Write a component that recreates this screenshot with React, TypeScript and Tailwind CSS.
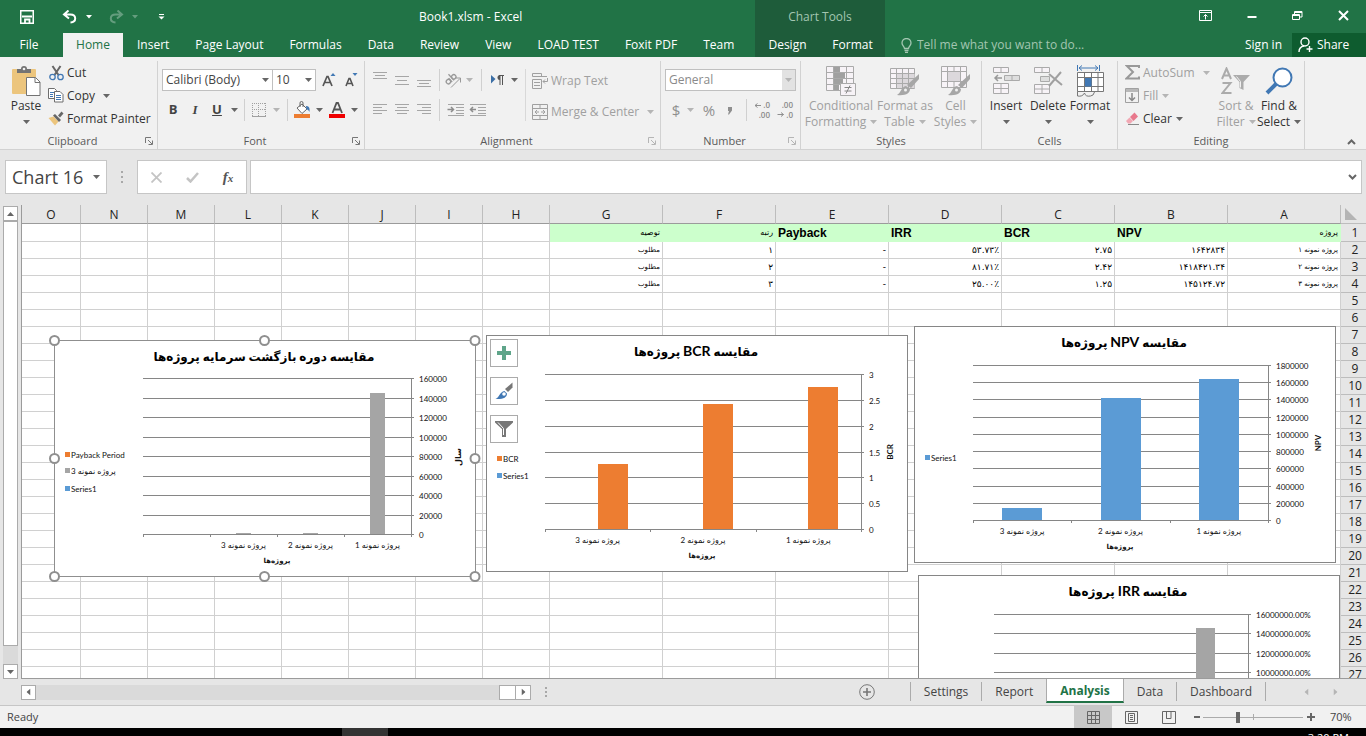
import React from 'react';
import clsx from 'clsx';

/* ---------- shared bits ---------- */

const Caret: React.FC<{ muted?: boolean; className?: string }> = ({ muted, className }) => (
  <svg width="7" height="4" viewBox="0 0 7 4" className={clsx('shrink-0', className)}>
    <path d="M0 0h7L3.5 4z" fill={muted ? '#b5b5b5' : '#666'} />
  </svg>
);

const Launcher: React.FC<{ muted?: boolean }> = ({ muted }) => (
  <svg width="8" height="8" viewBox="0 0 8 8" fill="none" stroke={muted ? '#b5b5b5' : '#777'}>
    <path d="M0.5 6V0.5H6M3 3l4 4M7.5 3.5v4h-4" />
  </svg>
);

const Divider = () => <div className="h-[22px] w-px shrink-0 bg-[#d0d0d0]" />;

const Group: React.FC<{
  label: string;
  className: string;
  launcher?: boolean;
  muted?: boolean;
  children: React.ReactNode;
}> = ({ label, className, launcher, muted, children }) => (
  <section aria-label={label} className={clsx('flex shrink-0 flex-col border-r border-[#d2d2d2]', className)}>
    <div className="flex h-[72px]">{children}</div>
    <div className="flex h-4 items-center text-[11px] text-[#5a5a5a]">
      <span className="flex-1 text-center">{label}</span>
      {launcher && (
        <button aria-label={`${label} settings`} className="w-3">
          <Launcher muted={muted} />
        </button>
      )}
    </div>
  </section>
);

const BigButton: React.FC<{
  icon: React.ReactNode;
  lines: string[];
  className: string;
  muted?: boolean;
}> = ({ icon, lines, className, muted }) => (
  <button
    className={clsx(
      'flex shrink-0 flex-col items-center pt-[3px] text-[12px] leading-4 whitespace-nowrap',
      muted ? 'text-[#a0a0a0]' : 'text-[#333]',
      className,
    )}
  >
    <span className="flex h-[34px] items-center justify-center">{icon}</span>
    <span>{lines[0]}</span>
    <span className="flex h-4 items-center gap-1">
      {lines[1]}
      <Caret muted={muted} />
    </span>
  </button>
);

const SmallButton: React.FC<{
  icon: React.ReactNode;
  text: string;
  muted?: boolean;
  caret?: boolean;
  wide?: boolean;
}> = ({ icon, text, muted, caret, wide }) => (
  <button
    className={clsx(
      'flex h-[23px] items-center text-[12px] whitespace-nowrap',
      muted ? 'text-[#a0a0a0]' : 'text-[#333]',
    )}
  >
    <span className="mr-[3px] flex w-4 justify-center">{icon}</span>
    {text}
    {caret && <Caret muted={muted} className={wide ? 'ml-2' : 'ml-1'} />}
  </button>
);

const IconButton: React.FC<{ label: string; className?: string; children: React.ReactNode }> = ({
  label,
  className = 'w-[22px]',
  children,
}) => (
  <button aria-label={label} className={clsx('flex h-[22px] shrink-0 items-center justify-center', className)}>
    {children}
  </button>
);

const Combo: React.FC<{ label: string; value: string; className: string; muted?: boolean }> = ({
  label,
  value,
  className,
  muted,
}) => (
  <div
    className={clsx(
      'flex h-[22px] shrink-0 items-center border border-[#c0c0c0] bg-white text-[12px]',
      muted ? 'text-[#8a8a8a]' : 'text-[#444]',
      className,
    )}
  >
    <select aria-label={label} className="h-full min-w-0 flex-1 appearance-none pl-[3px] outline-none">
      <option>{value}</option>
    </select>
    <span className={clsx('flex h-full w-[13px] items-center justify-center', muted && 'bg-[#e2e2e2]')}>
      <Caret muted={muted} />
    </span>
  </div>
);

/* ---------- icons ---------- */

const Lines: React.FC<{ rows: [number, number][]; top?: number; gap?: number }> = ({ rows, top = 3, gap = 4 }) => (
  <svg width="16" height="18" viewBox="0 0 16 18" stroke="#a6a6a6">
    {rows.map(([x, w], i) => (
      <path key={i} d={`M${x} ${top + i * gap + 0.5}h${w}`} />
    ))}
  </svg>
);

const PasteIcon = () => (
  <svg width="30" height="32" viewBox="0 0 30 32">
    <rect x="1" y="4" width="24" height="25" rx="1" fill="#ecc57d" />
    <path d="M6 8V4h4a3 3 0 0 1 6 0h4v4z" fill="#737373" />
    <circle cx="13" cy="4" r="1.3" fill="#f1f1f1" />
    <path d="M15.500 12.500h9l4.500 4.500v13.500h-13.500z" fill="#fff" stroke="#737373" />
    <path d="M24 12.500v5h5" fill="none" stroke="#737373" />
  </svg>
);

const CutIcon = () => (
  <svg width="15" height="16" viewBox="0 0 15 16" fill="none">
    <path d="M3.500 1l6 9M11.500 1l-6 9" stroke="#666" strokeWidth="2" />
    <circle cx="3.500" cy="12" r="2.700" stroke="#4178b4" strokeWidth="1.300" />
    <circle cx="11.500" cy="12" r="2.700" stroke="#4178b4" strokeWidth="1.300" />
  </svg>
);

const CopyIcon = () => (
  <svg width="16" height="15" viewBox="0 0 16 15" fill="#fff" stroke="#6e6e6e">
    <path d="M0.500 0.500h6l2 2v8h-8z" />
    <path d="M2 4.500h4M2 6.500h3M2 8.500h3" stroke="#4178b4" />
    <path d="M6.500 3.500h5.500l3 3v7.500h-8.500z" />
    <path d="M8 7.500h5M8 9.500h5M8 11.500h5" stroke="#4178b4" />
  </svg>
);

const PainterIcon = () => (
  <svg width="16" height="15" viewBox="0 0 16 15">
    <path d="M0.500 7l5-1.500 5 5L7 14.500z" fill="#ecc57d" />
    <path d="M5 4.500l2-1.500 6 6-2 2z" fill="#666" />
    <path d="M10 4.500L13.500 0.500l2 2-3.500 4z" fill="#666" />
  </svg>
);

const BordersIcon = () => (
  <svg width="14" height="14" viewBox="0 0 14 14" stroke="#a0a0a0" fill="none" shapeRendering="crispEdges">
    <path d="M0 0.500h14M0 6.500h14M0.500 0v14M6.500 0v14M13.500 0v14" strokeDasharray="1 1" />
    <path d="M0 13.500h14" />
  </svg>
);

const FillColorIcon = () => (
  <svg width="18" height="18" viewBox="0 0 18 18">
    <rect x="1" y="13" width="16" height="4" fill="#ed7d31" />
    <path d="M4 7l5-4 5 5-5 4.500z" fill="#fff" stroke="#666" />
    <path d="M7 6V2a1.500 1.500 0 0 1 3 0v4" fill="none" stroke="#666" />
    <path d="M13 5c3 0 4 2 3.500 6-1-2-2-2.500-3-2.500z" fill="#4178b4" />
  </svg>
);

const FontColorIcon = () => (
  <svg width="16" height="18" viewBox="0 0 16 18">
    <rect y="13" width="16" height="4" fill="#f00000" />
    <path d="M3.500 12L7.500 2h1.500l4 10M5 8.500h6.500" fill="none" stroke="#555" strokeWidth="1.800" />
  </svg>
);

const OrientationIcon = () => (
  <svg width="18" height="18" viewBox="0 0 18 18" fill="none" stroke="#999">
    <g transform="rotate(-42 7 9)" strokeWidth="1.300">
      <circle cx="4" cy="8.500" r="2.200" />
      <path d="M6.500 6v5.300M9 3v8.300" />
      <circle cx="11.200" cy="8.500" r="2.200" />
    </g>
    <path d="M7 16.500l9-9M12 7h4.500v4.500" />
  </svg>
);

const DirectionIcon = () => (
  <svg width="14" height="12" viewBox="0 0 14 12">
    <path d="M1 1l4.500 4L1 9.500z" fill="#3b6ea5" />
    <path d="M9 1.500h5M10 1.500V11M12.500 1.500V11" stroke="#555" fill="none" />
    <path d="M10 1a2.500 2.500 0 0 0 0 5z" fill="#555" />
  </svg>
);

const IndentIcon: React.FC<{ flip?: boolean }> = ({ flip }) => (
  <svg width="17" height="14" viewBox="0 0 17 14" fill="none" stroke="#a6a6a6">
    <path d="M1 1.500h16M9 4.500h8M9 7.500h8M9 10.500h8M1 12.500h16" />
    <path
      d={flip ? 'M7 6.500H1.500M4 4L1.500 6.500 4 9' : 'M0.500 6.500h6M4 4l2.500 2.500L4 9'}
      stroke="#8c8c8c"
      strokeWidth="1.500"
    />
  </svg>
);

const WrapIcon = () => (
  <svg width="16" height="16" viewBox="0 0 16 16" fill="none" stroke="#a0a0a0">
    <path d="M0.500 0.500h9v3h-9zM0.500 6.500h9v9h-9zM2 9.500h6M2 12.500h6M9 3.500h6" />
    <path d="M15.500 5v3.500H11M13 6.500l-2 2 2 2" />
  </svg>
);

const MergeIcon = () => (
  <svg width="16" height="16" viewBox="0 0 16 16" fill="none" stroke="#a0a0a0">
    <path d="M0.500 0.500h15v15H0.500zM0.500 4.500h15M0.500 11.500h15M8 0.500v4M8 11.500v4" />
    <path d="M3 8h4M9 8h4M5 6L3 8l2 2M11 6l2 2-2 2" />
  </svg>
);

const DecimalIcon: React.FC<{ increase?: boolean }> = ({ increase }) => (
  <span className="relative flex h-5 w-4 flex-col items-end text-[8px] leading-[10px] font-semibold text-[#8a8a8a]">
    <span>{increase ? '.0' : '.00'}</span>
    <span>{increase ? '.00' : '.0'}</span>
    <svg width="8" height="20" viewBox="0 0 8 20" fill="none" stroke="#8f8f8f" className="absolute top-0 left-0">
      <path d={increase ? 'M7 5.500H1M3.500 3.500l-2.500 2 2.500 2' : 'M0.500 14.500h6M4 12.500l2.500 2-2.500 2'} />
    </svg>
  </span>
);

const ConditionalIcon = () => (
  <svg width="30" height="30" viewBox="0 0 30 30" fill="#f7f3f7" stroke="#aaa">
    <path d="M0.500 0.500h27v24h-27zM7.500 0.500v24M20.500 0.500v24M0.500 6.500h27M0.500 12.500h27M0.500 18.500h27" />
    <path d="M8 1h6v5H8zM8 7h11v5H8zM8 13h9v5H8zM8 19h5v5H8z" fill="#a0a0a0" stroke="none" />
    <path d="M14.500 17.500h15v12h-15z" />
    <path d="M18.500 21.500h7M18.500 25h7M24 19.500l-4 8" stroke="#888" />
  </svg>
);

const Brush: React.FC = () => (
  <g stroke="none" fill="#a6a6a6">
    <path d="M29 8v5l-8 9-4-3z" />
    <path d="M16 20l4 3c0 4-4 7-13 6 4-2 4-8 9-9z" />
    <circle cx="15.500" cy="24" r="1.500" fill="#f1f1f1" />
  </g>
);

const TableStyleIcon = () => (
  <svg width="30" height="30" viewBox="0 0 30 30" fill="#f7f3f7" stroke="#aaa">
    <path d="M0.500 2.500h24v20h-24z" />
    <path d="M6.500 8h18v14h-18z" fill="#dcd8dc" stroke="none" />
    <path d="M6.500 2.500v20M12.500 2.500v20M18.500 2.500v20M0.500 7.500h24M0.500 12.500h24M0.500 17.500h24" fill="none" />
    <Brush />
  </svg>
);

const CellStyleIcon = () => (
  <svg width="30" height="30" viewBox="0 0 30 30" fill="#f7f3f7" stroke="#aaa">
    <path d="M0.500 0.500h25v21h-25zM6.500 0.500v21M19.500 0.500v21M0.500 5.500h25M0.500 15.500h25M13 0.500v5M13 15.500v6" />
    <path d="M6.500 5.500h13v10h-13z" fill="#dcd8dc" />
    <Brush />
  </svg>
);

const InsertIcon = () => (
  <svg width="27" height="28" viewBox="0 0 27 28" fill="#f7f3f7" stroke="#aaa">
    <path d="M0.500 0.500h15v5h-15zM8 0.500v5M0.500 16.500h15v10h-15zM8 16.500v10M0.500 21.500h15" />
    <path d="M11.500 8.500h15v5h-15z" fill="#dedede" />
    <path d="M19 8.500v5" />
    <path d="M9 11H2M5 8l-3 3 3 3" fill="none" stroke="#999" strokeWidth="1.500" />
  </svg>
);

const DeleteIcon = () => (
  <svg width="29" height="28" viewBox="0 0 29 28" fill="#f7f3f7" stroke="#aaa">
    <path d="M0.500 0.500h15v5h-15zM8 0.500v5M0.500 17.500h15v9h-15zM8 17.500v9M0.500 22h15" />
    <path d="M6.500 9.500h9v5h-9z" fill="#dedede" />
    <path d="M15 7l13 11M27 5L15 19" stroke="#a0a0a0" strokeWidth="2" />
  </svg>
);

const FormatIcon = () => (
  <svg width="29" height="32" viewBox="0 0 29 32" fill="none" stroke="#777">
    <path d="M1.500 0v6M23.500 0v6M3 3h19M6 0.500L3 3l3 2.500M19 0.500L22 3l-3 2.500" stroke="#4178b4" />
    <path d="M1.500 7.500h26v19h-26zM8.500 7.500v19M15.500 7.500v19M22 7.500v19M1.500 12.500h26M1.500 21.500h26" fill="#fff" />
    <path d="M9 13h6.500v8.500H9z" fill="#4178b4" stroke="none" />
    <path d="M1.500 26.500v4.500q5 1 7-3 1 4 6 3 3 0 4-4" />
  </svg>
);

const SigmaIcon = () => (
  <svg width="15" height="15" viewBox="0 0 15 15" fill="none" stroke="#999" strokeWidth="2">
    <path d="M14 3V1H2l6 6-6.500 6.500H14v-2" />
  </svg>
);

const FillIcon = () => (
  <svg width="14" height="15" viewBox="0 0 14 15" fill="none" stroke="#a0a0a0">
    <path d="M0.500 0.500h13v14H0.500z" />
    <path d="M1 1h12v3H1z" fill="#b8b8b8" stroke="none" />
    <path d="M7 5v8M4 9.500L7 12.500l3-3" stroke="#888" strokeWidth="1.500" />
  </svg>
);

const EraserIcon = () => (
  <svg width="14" height="13" viewBox="0 0 14 13">
    <path d="M5 5L9.500 0.500l3.500 4L8.500 9z" fill="#e8788c" />
    <path d="M4.500 5.500L8 9l-2.500 2.500H3L1 9z" fill="#f2a7b3" />
    <path d="M3 12.500h11" stroke="#888" />
  </svg>
);

const SortIcon = () => (
  <svg width="30" height="28" viewBox="0 0 30 28" fill="none" stroke="#ababab" strokeWidth="2">
    <path d="M1 12L5.500 1.500 10 12M2.500 8.500h6M1.500 16h8L1.500 26h9" />
    <path d="M12 8h17l-6.500 7v8l-4-2v-6z" fill="#ababab" stroke="none" />
    <path d="M15.500 9.500l4 5v6" stroke="#f1f1f1" strokeWidth="1" />
  </svg>
);

const FindIcon = () => (
  <svg width="28" height="28" viewBox="0 0 28 28" fill="none" stroke="#4178b4">
    <circle cx="17.500" cy="10.500" r="9" fill="#fff" strokeWidth="2" />
    <path d="M11 17l-9 9" strokeWidth="4" />
  </svg>
);

/* ---------- header ---------- */

const TABS = ['Insert', 'Page Layout', 'Formulas', 'Data', 'Review', 'View', 'LOAD TEST', 'Foxit PDF', 'Team'];

const Header: React.FC = () => (
  <header className="flex h-[57px] shrink-0 bg-[#217346] text-[12px] text-white">
    <div className="flex w-[755px] shrink-0 flex-col">
      <div className="flex h-[33px] items-center">
        <div className="flex flex-1 items-center pl-5">
          <button aria-label="Save">
            <svg width="14" height="14" viewBox="0 0 14 14" fill="none" stroke="#fff" strokeWidth="1.500">
              <path d="M0.750 0.750h12.500v12.500H0.750z" />
              <path d="M2 6.500h10M5 13V9.500h4.500V13" strokeWidth="1.800" />
            </svg>
          </button>
          <button aria-label="Undo" className="ml-7 flex items-center gap-2">
            <svg width="16" height="14" viewBox="0 0 16 14" fill="none" stroke="#fff" strokeWidth="2">
              <path d="M6.500 0.500L2 4.500l5 4M2.500 4.500h6c6 0 6.500 7.500 0 8" />
            </svg>
            <svg width="6" height="4" viewBox="0 0 6 4">
              <path d="M0 0h6L3 3.500z" fill="#fff" />
            </svg>
          </button>
          <button aria-label="Redo" className="ml-4 flex items-center gap-2 opacity-30">
            <svg width="16" height="14" viewBox="0 0 16 14" fill="none" stroke="#fff" strokeWidth="2">
              <path d="M9.500 0.500L14 4.500l-5 4M13.500 4.500h-6c-6 0-6.500 7.500 0 8" />
            </svg>
            <svg width="6" height="4" viewBox="0 0 6 4">
              <path d="M0 0h6L3 3.500z" fill="#fff" />
            </svg>
          </button>
          <button aria-label="Customize Quick Access Toolbar" className="ml-5">
            <svg width="7" height="6" viewBox="0 0 7 6">
              <path d="M1 0.500h5" stroke="#fff" />
              <path d="M0.500 2.500h6L3.500 5.500z" fill="#fff" />
            </svg>
          </button>
        </div>
        <h1 className="w-[337px] pl-px text-[12px]">Book1.xlsm - Excel</h1>
      </div>
      <nav className="flex h-6 items-center">
        <button className="w-[58px] shrink-0">File</button>
        <button className="mr-px ml-[5px] h-full w-[60px] shrink-0 bg-[#f1f1f1] text-[#217346]">Home</button>
        {TABS.map(tab => (
          <button key={tab} className="h-full px-[13px] whitespace-nowrap">
            {tab}
          </button>
        ))}
      </nav>
    </div>
    <div className="flex w-[130px] shrink-0 flex-col bg-[#1e5c3a]">
      <div className="flex h-[33px] items-center justify-center text-[#a3c6b1]">Chart Tools</div>
      <nav className="flex h-6">
        <button className="flex-1">Design</button>
        <button className="flex-1">Format</button>
      </nav>
    </div>
    <div className="flex min-w-0 flex-1 flex-col">
      <div className="flex h-[30px] items-center justify-end gap-[35px] pr-[17px]">
        <button aria-label="Ribbon Display Options">
          <svg width="13" height="11" viewBox="0 0 13 11" fill="none" stroke="#fff">
            <path d="M0.500 0.500h12v10H0.500zM0.500 2.500h12M6.500 9.500V4.500M4.500 6.500l2-2 2 2" />
          </svg>
        </button>
        <button aria-label="Minimize">
          <svg width="10" height="11" viewBox="0 0 10 11">
            <path d="M0.500 7h9" stroke="#fff" strokeWidth="2" />
          </svg>
        </button>
        <button aria-label="Restore">
          <svg width="11" height="11" viewBox="0 0 11 11" fill="none" stroke="#fff">
            <path d="M0.500 4.500h7v5h-7zM0.500 5.500h7M2.500 4V1.500h7.500v5.500H8M2.500 2.500H10" />
          </svg>
        </button>
        <button aria-label="Close">
          <svg width="11" height="11" viewBox="0 0 11 11" stroke="#fff" strokeWidth="2">
            <path d="M1 1l9 9M10 1l-9 9" />
          </svg>
        </button>
      </div>
      <div className="mt-[3px] flex h-6 items-center">
        <label htmlFor="tell-me" className="pl-4" aria-label="Tell me what you want to do">
          <svg width="11" height="15" viewBox="0 0 11 15" fill="none" stroke="#a3c6b1" strokeWidth="1.300">
            <path d="M3.500 10.500c0-2-2.500-3-2.500-5.500a4.500 4.500 0 0 1 9 0c0 2.500-2.500 3.500-2.500 5.500zM3.500 12.500h4M4 14.300h3" />
          </svg>
        </label>
        <input
          id="tell-me"
          placeholder="Tell me what you want to do..."
          className="ml-[5px] w-[190px] bg-transparent outline-none placeholder:text-[#a3c6b1]"
        />
        <span className="flex-1" />
        <button className="mr-[10px]">Sign in</button>
        <button className="flex h-full w-[74px] items-center gap-1 bg-[#0e5c2f] pl-[6px]">
          <svg width="15" height="16" viewBox="0 0 15 16" fill="none" stroke="#fff" strokeWidth="1.400">
            <circle cx="7" cy="5" r="4" />
            <path d="M1 15c0-4 2-5.500 5-6M11.500 9v6M8.500 12h6" />
          </svg>
          Share
        </button>
      </div>
    </div>
  </header>
);

/* ---------- ribbon ---------- */

const Ribbon: React.FC = () => (
  <div className="flex h-[93px] shrink-0 border-b border-[#d2d2d2] bg-[#f1f1f1] pt-1">
    <Group label="Clipboard" className="w-[158px]" launcher>
      <BigButton icon={<PasteIcon />} lines={['Paste']} className="w-12 pl-1" />
      <div className="flex flex-col">
        <SmallButton icon={<CutIcon />} text="Cut" />
        <SmallButton icon={<CopyIcon />} text="Copy" caret wide />
        <SmallButton icon={<PainterIcon />} text="Format Painter" />
      </div>
    </Group>

    <Group label="Font" className="w-[207px]" launcher>
      <div className="flex flex-col gap-2 pt-2 pl-1">
        <div className="flex items-center">
          <Combo label="Font" value="Calibri (Body)" className="w-[111px]" />
          <Combo label="Font size" value="10" className="w-[43px] border-l-0" />
          <span className="w-[2px]" />
          <IconButton label="Increase font size">
            <svg width="14" height="16" viewBox="0 0 14 16">
              <path d="M1 14L5 4.500h1L10 14M2.500 10.500h6" fill="none" stroke="#555" strokeWidth="1.700" />
              <path d="M8.500 4L11 1l2.500 3z" fill="#4178b4" />
            </svg>
          </IconButton>
          <IconButton label="Decrease font size">
            <svg width="14" height="16" viewBox="0 0 14 16">
              <path d="M2 14l3-7.500h1L9 14M3 11.500h5" fill="none" stroke="#555" strokeWidth="1.600" />
              <path d="M8.500 1h5L11 4z" fill="#4178b4" />
            </svg>
          </IconButton>
        </div>
        <div className="flex items-center text-[13px] text-[#444]">
          <IconButton label="Bold">
            <b>B</b>
          </IconButton>
          <IconButton label="Italic">
            <i className="font-[Liberation_Serif,serif] font-bold">I</i>
          </IconButton>
          <IconButton label="Underline">
            <b className="underline">U</b>
          </IconButton>
          <IconButton label="Underline options" className="w-3">
            <Caret />
          </IconButton>
          <span className="w-1" />
          <Divider />
          <IconButton label="Borders" className="w-7">
            <BordersIcon />
          </IconButton>
          <Caret muted />
          <span className="w-[7px]" />
          <Divider />
          <IconButton label="Fill color" className="w-7">
            <FillColorIcon />
          </IconButton>
          <Caret />
          <IconButton label="Font color" className="w-7">
            <FontColorIcon />
          </IconButton>
          <Caret />
        </div>
      </div>
    </Group>

    <Group label="Alignment" className="w-[296px]" launcher muted>
      <div className="flex flex-col gap-2 pt-2 pl-1">
        <div className="flex items-center">
          <IconButton label="Top align">
            <Lines rows={[[1, 14], [3, 10], [1, 14]]} top={1} gap={3} />
          </IconButton>
          <IconButton label="Middle align">
            <Lines rows={[[1, 14], [3, 10], [1, 14]]} top={5} />
          </IconButton>
          <IconButton label="Bottom align">
            <Lines rows={[[1, 14], [3, 10], [1, 14]]} top={9} gap={3} />
          </IconButton>
          <span className="w-1" />
          <Divider />
          <IconButton label="Orientation" className="w-[26px]">
            <OrientationIcon />
          </IconButton>
          <Caret muted />
          <span className="w-2" />
          <Divider />
          <IconButton label="Text direction" className="w-[29px]">
            <DirectionIcon />
          </IconButton>
          <Caret />
        </div>
        <div className="flex items-center">
          <IconButton label="Align left">
            <Lines rows={[[1, 14], [1, 9], [1, 14], [1, 9]]} gap={3} />
          </IconButton>
          <IconButton label="Center">
            <Lines rows={[[1, 14], [3, 10], [1, 14], [3, 10]]} gap={3} />
          </IconButton>
          <IconButton label="Align right">
            <Lines rows={[[1, 14], [6, 9], [1, 14], [6, 9]]} gap={3} />
          </IconButton>
          <span className="w-1" />
          <Divider />
          <span className="w-1" />
          <IconButton label="Increase indent">
            <IndentIcon />
          </IconButton>
          <IconButton label="Decrease indent">
            <IndentIcon flip />
          </IconButton>
        </div>
      </div>
      <div className="mt-2 ml-[7px] h-[52px] w-px bg-[#d8d8d8]" />
      <div className="flex flex-col gap-2 pt-2 pl-[6px]">
        <SmallButton icon={<WrapIcon />} text="Wrap Text" muted />
        <SmallButton icon={<MergeIcon />} text="Merge & Center" muted caret wide />
      </div>
    </Group>

    <Group label="Number" className="w-[140px]" launcher muted>
      <div className="flex flex-col gap-2 pt-2 pl-1">
        <Combo label="Number format" value="General" className="w-[131px]" muted />
        <div className="flex items-center text-[15px] text-[#8f8f8f]">
          <IconButton label="Currency">$</IconButton>
          <Caret muted />
          <IconButton label="Percent" className="w-[30px]">
            %
          </IconButton>
          <IconButton label="Comma style" className="w-3">
            <svg width="6" height="9" viewBox="0 0 6 9">
              <path d="M1 1h4v3.500L2 8.500H1L2 5H1z" fill="#8f8f8f" />
            </svg>
          </IconButton>
          <span className="w-[10px]" />
          <Divider />
          <IconButton label="Increase decimal" className="w-[30px]">
            <DecimalIcon increase />
          </IconButton>
          <IconButton label="Decrease decimal" className="w-4">
            <DecimalIcon />
          </IconButton>
        </div>
      </div>
    </Group>

    <Group label="Styles" className="w-[181px]">
      <BigButton icon={<ConditionalIcon />} lines={['Conditional', 'Formatting']} className="w-20" muted />
      <BigButton icon={<TableStyleIcon />} lines={['Format as', 'Table']} className="w-12" muted />
      <BigButton icon={<CellStyleIcon />} lines={['Cell', 'Styles']} className="w-[53px]" muted />
    </Group>

    <Group label="Cells" className="w-[136px]">
      <BigButton icon={<InsertIcon />} lines={['Insert']} className="ml-[3px] w-[42px]" />
      <BigButton icon={<DeleteIcon />} lines={['Delete']} className="w-[42px]" />
      <BigButton icon={<FormatIcon />} lines={['Format']} className="w-[42px]" />
    </Group>

    <Group label="Editing" className="w-[187px]">
      <div className="flex w-[96px] flex-col pl-[6px]">
        <SmallButton icon={<SigmaIcon />} text="AutoSum" muted caret wide />
        <SmallButton icon={<FillIcon />} text="Fill" muted caret />
        <SmallButton icon={<EraserIcon />} text="Clear" caret />
      </div>
      <BigButton icon={<SortIcon />} lines={['Sort &', 'Filter']} className="w-[44px]" muted />
      <BigButton icon={<FindIcon />} lines={['Find &', 'Select']} className="w-[42px]" />
    </Group>

    <div className="flex flex-1 items-end justify-end pr-[10px] pb-1">
      <button aria-label="Collapse ribbon">
        <svg width="9" height="7" viewBox="0 0 9 7" fill="none" stroke="#666" strokeWidth="2">
          <path d="M1 6l3.500-3.500L8 6" />
        </svg>
      </button>
    </div>
  </div>
);

const FormulaBar: React.FC = () => (
  <div className="flex h-[55px] shrink-0 items-start bg-[#e6e6e6] pt-[10px] pr-1 pl-[5px]">
    <div className="flex h-[34px] w-[102px] items-center border border-[#c6c6c6] bg-white pr-[6px]">
      <select aria-label="Name box" className="min-w-0 flex-1 appearance-none pl-1.5 text-[18px] text-[#444] outline-none">
        <option>Chart 16</option>
      </select>
      <Caret />
    </div>
    <div className="flex h-[34px] w-[30px] flex-col items-center justify-center gap-[3px]">
      <i className="size-[2px] bg-[#a8a8a8]" />
      <i className="size-[2px] bg-[#a8a8a8]" />
      <i className="size-[2px] bg-[#a8a8a8]" />
    </div>
    <div className="flex h-[34px] w-[110px] items-center border border-[#c6c6c6] bg-white">
      <button aria-label="Cancel" className="flex w-9 justify-center">
        <svg width="11" height="11" viewBox="0 0 11 11" stroke="#c4c4c4" strokeWidth="1.800">
          <path d="M0.500 0.500l10 10M10.500 0.500l-10 10" />
        </svg>
      </button>
      <button aria-label="Enter" className="flex w-9 justify-center">
        <svg width="13" height="11" viewBox="0 0 13 11" fill="none" stroke="#c4c4c4" strokeWidth="2.500">
          <path d="M1 6l3.500 3.500L12 1" />
        </svg>
      </button>
      <button aria-label="Insert function" className="w-9 font-[Liberation_Serif,serif] text-[15px] font-bold text-[#555] italic">
        f<span className="text-[11px]">x</span>
      </button>
    </div>
    <div className="ml-[3px] flex h-[34px] min-w-0 flex-1 items-center border border-[#c6c6c6] bg-white pr-1">
      <input aria-label="Formula" className="min-w-0 flex-1 px-2 text-[18px] outline-none" />
      <svg width="9" height="7" viewBox="0 0 9 7" fill="none" stroke="#666" strokeWidth="2">
        <path d="M1 1l3.500 3.500L8 1" />
      </svg>
    </div>
  </div>
);

/* ---------- charts ---------- */

interface Bar {
  slot: number;
  value: number;
}

interface ChartProps {
  title: React.ReactNode;
  left: number;
  axis: number;
  top: number;
  max: number;
  ticks: string[]; // from the axis maximum down to zero
  slots: number;
  bars: Bar[];
  barWidth: number;
  barShift?: number;
  color: string;
  names: { slot: number; text: string }[];
  xTitleX?: number;
  yTitle?: string;
  legend: { color: string; text: string; y: number; rtl?: boolean }[];
}

const BASE = 194;

const Chart: React.FC<ChartProps> = p => {
  const slotWidth = (p.axis - p.left) / p.slots;
  const step = (BASE - p.top) / (p.ticks.length - 1);
  const mid = (slot: number) => p.left + slotWidth * (slot + 0.5);

  return (
    <svg
      width="422"
      height="237"
      viewBox="0 0 422 237"
      className="overflow-visible font-[Lato,'DejaVu_Sans',sans-serif] text-[8px]"
      fill="#111"
    >
      <rect x="0.5" y="0.5" width="421" height="236" fill="#fff" stroke="#868686" />
      <text x="210" y="21" textAnchor="middle" direction="rtl" className="text-[12px] font-bold" fill="#000">
        {p.title}
      </text>
      {p.ticks.map((t, i) => {
        const y = Math.round(p.top + step * i) + 0.5;
        return (
          <g key={t}>
            <path d={`M${p.left} ${y}H${p.axis + 3}`} stroke="#868686" />
            <text x={p.axis + 8} y={y + 3}>
              {t}
            </text>
          </g>
        );
      })}
      <path d={`M${p.axis + 0.5} ${p.top}V${BASE + 3}`} stroke="#868686" />
      {Array.from({ length: p.slots }, (_, i) => (
        <path key={i} d={`M${Math.round(p.left + slotWidth * i) + 0.5} ${BASE}v3`} stroke="#868686" />
      ))}
      {p.bars.map(b => {
        const h = Math.max(1, Math.round(((BASE - p.top) * b.value) / p.max));
        const x = Math.round(mid(b.slot) - p.barWidth / 2 + (p.barShift ?? 0));
        return <rect key={b.slot} x={x} y={BASE - h} width={p.barWidth} height={h} fill={p.color} />;
      })}
      {p.names.map(n => (
        <text key={n.text} x={mid(n.slot)} y="208" textAnchor="middle" direction="rtl">
          {n.text}
        </text>
      ))}
      {p.xTitleX && (
        <text x={p.xTitleX} y="223" textAnchor="middle" direction="rtl" className="text-[7px] font-bold">
          پروژه‌ها
        </text>
      )}
      {p.yTitle && (
        <text transform="translate(407 117) rotate(-90)" textAnchor="middle" className="font-bold">
          {p.yTitle}
        </text>
      )}
      {p.legend.map(l => (
        <g key={l.text}>
          <rect x="11" y={l.y - 3} width="5" height="5" fill={l.color} />
          <text x="17" y={l.y + 3} direction={l.rtl ? 'rtl' : 'ltr'} textAnchor={l.rtl ? 'end' : 'start'}>
            {l.text}
          </text>
        </g>
      ))}
    </svg>
  );
};

const CompareTitle: React.FC<{ metric: string }> = ({ metric }) => (
  <>
    مقایسه <tspan className="text-[14px]">{metric}</tspan> پروژه‌ها
  </>
);

const PROJECTS = ['پروژه نمونه 1', 'پروژه نمونه 2', 'پروژه نمونه 3'];

const NAMES3 = [
  { slot: 2, text: PROJECTS[0] },
  { slot: 1, text: PROJECTS[1] },
  { slot: 0, text: PROJECTS[2] },
];

const NpvChart = () => (
  <Chart
    title={<CompareTitle metric="NPV" />}
    left={59}
    axis={354}
    top={39}
    max={1800000}
    ticks={['1800000', '1600000', '1400000', '1200000', '1000000', '800000', '600000', '400000', '200000', '0']}
    slots={3}
    bars={[
      { slot: 2, value: 1642834 },
      { slot: 1, value: 1418421 },
      { slot: 0, value: 145124 },
    ]}
    barWidth={40}
    color="#5b9bd5"
    names={NAMES3}
    xTitleX={206}
    yTitle="NPV"
    legend={[{ color: '#5b9bd5', text: 'Series1', y: 132 }]}
  />
);

const BcrChart = () => (
  <Chart
    title={<CompareTitle metric="BCR" />}
    left={59}
    axis={375}
    top={39}
    max={3}
    ticks={['3', '2.5', '2', '1.5', '1', '0.5', '0']}
    slots={3}
    bars={[
      { slot: 2, value: 2.75 },
      { slot: 1, value: 2.42 },
      { slot: 0, value: 1.25 },
    ]}
    barWidth={30}
    barShift={15}
    color="#ed7d31"
    names={NAMES3}
    xTitleX={216}
    yTitle="BCR"
    legend={[
      { color: '#ed7d31', text: 'BCR', y: 124 },
      { color: '#5b9bd5', text: 'Series1', y: 141 },
    ]}
  />
);

const PaybackChart = () => (
  <Chart
    title="مقایسه دوره بازگشت سرمایه پروژه‌ها"
    left={89}
    axis={357}
    top={38}
    max={160000}
    ticks={['160000', '140000', '120000', '100000', '80000', '60000', '40000', '20000', '0']}
    slots={4}
    bars={[
      { slot: 3, value: 145124 },
      { slot: 2, value: 1 },
      { slot: 1, value: 1 },
    ]}
    barWidth={15}
    color="#a5a5a5"
    names={[
      { slot: 3, text: PROJECTS[0] },
      { slot: 2, text: PROJECTS[1] },
      { slot: 1, text: PROJECTS[2] },
    ]}
    xTitleX={223}
    yTitle="سال"
    legend={[
      { color: '#ed7d31', text: 'Payback Period', y: 115 },
      { color: '#a5a5a5', text: 'پروژه نمونه 3', y: 131, rtl: true },
      { color: '#5b9bd5', text: 'Series1', y: 149 },
    ]}
  />
);

const IrrChart = () => (
  <Chart
    title={<CompareTitle metric="IRR" />}
    left={76}
    axis={330}
    top={39}
    max={16000000}
    ticks={[
      '16000000.00%',
      '14000000.00%',
      '12000000.00%',
      '10000000.00%',
      '8000000.00%',
      '6000000.00%',
      '4000000.00%',
      '2000000.00%',
      '0.00%',
    ]}
    slots={3}
    bars={[{ slot: 2, value: 14512472 }]}
    barWidth={19}
    color="#a5a5a5"
    names={NAMES3}
    legend={[]}
  />
);

const SelectionHandles = () => (
  <svg width="422" height="237" viewBox="0 0 422 237" className="absolute inset-0 overflow-visible" fill="#fff">
    <rect x="0.5" y="0.5" width="421" height="236" fill="none" stroke="#8f8f8f" />
    {[0.5, 210.5, 421].map(x =>
      [0.5, 118.5, 236.5]
        .filter(y => !(x === 210.5 && y === 118.5))
        .map(y => <circle key={`${x}-${y}`} cx={x} cy={y} r="4.500" stroke="#8f8f8f" strokeWidth="2" />),
    )}
  </svg>
);

const ChartTools = () => (
  <div className="absolute top-1 left-1 flex flex-col gap-[10px]">
    <button aria-label="Chart elements" className="flex size-7 items-center justify-center border border-[#ababab] bg-white">
      <svg width="14" height="14" viewBox="0 0 14 14" fill="#5fa58a">
        <path d="M5 0h4v5h5v4H9v5H5V9H0V5h5z" />
      </svg>
    </button>
    <button aria-label="Chart styles" className="flex size-7 items-center justify-center border border-[#ababab] bg-white">
      <svg width="18" height="18" viewBox="0 0 18 18">
        <path d="M17.500 0.500v5L13 10l-3-3z" fill="#777" />
        <path d="M9.500 9l2.500 2.500c0 4-4 6-11.500 5.500 4-1.500 4-7 9-8z" fill="#4178b4" />
        <circle cx="9" cy="12" r="1.800" fill="#fff" />
      </svg>
    </button>
    <button aria-label="Chart filters" className="flex size-7 items-center justify-center border border-[#ababab] bg-white">
      <svg width="18" height="16" viewBox="0 0 18 16">
        <path d="M0 0h18v1.500L11 8v8H7V8L0 1.500z" fill="#777" />
        <path d="M3 1.500L8.500 7.500V14" fill="none" stroke="#fff" />
      </svg>
    </button>
  </div>
);

/* ---------- sheet ---------- */

const NARROW = ['N', 'M', 'L', 'K', 'J', 'I', 'H'];
const WIDE = ['G', 'F', 'E', 'D', 'C', 'B', 'A'];
const COLUMNS = ['O', ...NARROW, ...WIDE];

const HEADINGS: Record<string, string> = {
  G: 'توصیه',
  F: 'رتبه',
  E: 'Payback',
  D: 'IRR',
  C: 'BCR',
  B: 'NPV',
  A: 'پروژه',
};

const DATA: Record<string, string>[] = [
  { G: 'مطلوب', F: '۱', E: '-', D: '۵۳.۷۳٪', C: '۲.۷۵', B: '۱۶۴۲۸۳۴', A: 'پروژه نمونه ۱' },
  { G: 'مطلوب', F: '۲', E: '-', D: '۸۱.۷۱٪', C: '۲.۴۲', B: '۱۴۱۸۴۲۱.۳۴', A: 'پروژه نمونه ۲' },
  { G: 'مطلوب', F: '۳', E: '-', D: '۲۵.۰۰٪', C: '۱.۲۵', B: '۱۴۵۱۲۴.۷۲', A: 'پروژه نمونه ۳' },
];

const isLatin = (text: string) => /^[A-Z]/.test(text);
// letters only, so that digits and the percent sign stay left to right
const isRtl = (text: string) => /[\u0622-\u064a]/.test(text);

const cellText = (text: string, heading: boolean) => {
  if (isLatin(text)) return "px-[2px] text-left font-['Liberation_Sans',sans-serif] text-[12px] font-bold";
  if (!isRtl(text)) return "px-[2px] text-right font-['DejaVu_Sans',sans-serif] text-[9px]";
  return clsx("px-[2px] text-right font-['DejaVu_Sans',sans-serif]", heading ? 'text-[8px]' : 'text-[7px]');
};

const Grid: React.FC = () => (
  <table className="w-full table-fixed border-separate border-spacing-0">
    <colgroup>
      <col />
      {NARROW.map(c => (
        <col key={c} className="w-[67px]" />
      ))}
      {WIDE.map(c => (
        <col key={c} className="w-[113px]" />
      ))}
      <col className="w-[25px]" />
    </colgroup>
    <thead>
      <tr className="h-[19px] bg-[#e6e6e6] text-[12px] leading-[17px] text-[#222]">
        {COLUMNS.map(c => (
          <th
            key={c}
            scope="col"
            className="border-r border-b border-r-[#bdbdbd] border-b-[#9b9b9b] p-0 align-bottom font-normal"
          >
            {c}
          </th>
        ))}
        <th aria-label="Select all" className="border-b border-[#bdbdbd] p-0">
          <svg width="12" height="12" viewBox="0 0 12 12" className="ml-1">
            <path d="M0 0v12h12z" fill="#b4b4b4" />
          </svg>
        </th>
      </tr>
    </thead>
    <tbody>
      {Array.from({ length: 27 }, (_, r) => (
        <tr key={r} className={r === 0 ? 'h-[18px]' : 'h-[17px]'}>
          {COLUMNS.map(c => {
            const text = (r === 0 ? HEADINGS[c] : DATA[r - 1]?.[c]) ?? '';
            return (
              <td
                key={c}
                dir={isRtl(text) ? 'rtl' : 'ltr'}
                className={clsx(
                  'overflow-hidden border-r border-b py-0 leading-[16px] whitespace-nowrap text-black',
                  r === 0 && c in HEADINGS ? 'border-[#ccffcc] bg-[#ccffcc]' : 'border-[#d0d0d0] bg-white',
                  cellText(text, r === 0),
                )}
              >
                {text}
              </td>
            );
          })}
          <th
            scope="row"
            className="border-b border-[#bdbdbd] bg-[#e6e6e6] p-0 pl-[3px] text-center text-[12px] leading-[16px] font-normal text-[#222]"
          >
            {r + 1}
          </th>
        </tr>
      ))}
    </tbody>
  </table>
);

const Sheet: React.FC = () => (
  <main className="flex min-h-0 flex-1 bg-[#e6e6e6]">
    <div className="flex w-[21px] shrink-0 flex-col pt-px pl-[3px]">
      <button aria-label="Scroll up" className="flex h-[15px] w-[15px] items-center justify-center border border-[#ababab] bg-white">
        <Caret className="rotate-180" />
      </button>
      <div className="flex w-[15px] flex-1 flex-col bg-[#dadada]">
        <div className="mb-[18px] flex-1 border border-[#ababab] bg-white" />
      </div>
      <button aria-label="Scroll down" className="flex h-[15px] w-[15px] items-center justify-center border border-[#ababab] bg-white">
        <Caret />
      </button>
    </div>
    <div className="relative min-w-0 flex-1 overflow-hidden border-b border-l border-[#9b9b9b]">
      <Grid />
      <div className="absolute top-[135px] right-[890px]">
        <PaybackChart />
        <SelectionHandles />
      </div>
      <div className="absolute top-[130px] right-[458px]">
        <BcrChart />
        <ChartTools />
      </div>
      <div className="absolute top-[121px] right-[30px]">
        <NpvChart />
      </div>
      <div className="absolute top-[370px] right-[26px]">
        <IrrChart />
      </div>
    </div>
  </main>
);

const SHEETS = ['Settings', 'Report', 'Analysis', 'Data', 'Dashboard'];

const SheetTabs: React.FC = () => (
  <div className="flex h-[27px] shrink-0 border-b border-[#c6c6c6] bg-[#e6e6e6] text-[12px] text-[#444]">
    <div className="flex w-[531px] items-center pl-[21px]">
      <button aria-label="Scroll left" className="flex h-[15px] w-[15px] items-center justify-center border border-[#ababab] bg-white">
        <Caret className="rotate-90" />
      </button>
      <div className="flex h-[15px] flex-1 justify-end bg-[#dadada]">
        <div className="w-[17px] border border-[#ababab] bg-white" />
      </div>
      <button aria-label="Scroll right" className="flex h-[15px] w-[15px] items-center justify-center border border-l-0 border-[#ababab] bg-white">
        <Caret className="-rotate-90" />
      </button>
    </div>
    <div className="flex w-[30px] flex-col items-center justify-center gap-[2px]">
      <i className="size-[2px] bg-[#a8a8a8]" />
      <i className="size-[2px] bg-[#a8a8a8]" />
      <i className="size-[2px] bg-[#a8a8a8]" />
    </div>
    <div className="flex flex-1 items-center justify-end">
      <button aria-label="New sheet" className="mr-[35px]">
        <svg width="16" height="16" viewBox="0 0 16 16" fill="none" stroke="#777">
          <circle cx="8" cy="8" r="7.300" />
          <path d="M8 4v8M4 8h8" strokeWidth="1.600" />
        </svg>
      </button>
      <nav className="flex h-full items-start">
        <span className="mt-[3px] h-[19px] w-px bg-[#ababab]" />
        {SHEETS.map((s, i) => (
          <React.Fragment key={s}>
            <button
              className={clsx(
                'px-[13px]',
                s === 'Analysis'
                  ? 'h-6 border-x border-b-2 border-x-[#ababab] border-b-[#217346] bg-white pt-[2px] font-bold text-[#217346]'
                  : 'h-[26px]',
              )}
            >
              {s}
            </button>
            {s !== 'Analysis' && SHEETS[i + 1] !== 'Analysis' && <span className="mt-[3px] h-[19px] w-px bg-[#ababab]" />}
          </React.Fragment>
        ))}
      </nav>
      <div className="flex w-[100px] justify-end gap-[22px] pr-[27px]">
        <button aria-label="Previous sheets">
          <Caret muted className="rotate-90" />
        </button>
        <button aria-label="Next sheets">
          <Caret muted className="-rotate-90" />
        </button>
      </div>
    </div>
  </div>
);

const StatusBar: React.FC = () => (
  <footer className="flex h-[22px] shrink-0 items-center bg-[#f1f1f1] text-[11px] text-[#444]">
    <span className="flex-1 pl-[7px]">Ready</span>
    <button aria-label="Normal view" className="flex h-full w-[38px] items-center justify-center bg-[#c8c8c8]">
      <svg width="13" height="13" viewBox="0 0 13 13" fill="none" stroke="#666">
        <path d="M0.500 0.500h12v12H0.500zM4.500 0.500v12M8.500 0.500v12M0.500 4.500h12M0.500 8.500h12" />
      </svg>
    </button>
    <button aria-label="Page layout view" className="flex w-[38px] justify-center">
      <svg width="13" height="13" viewBox="0 0 13 13" fill="none" stroke="#666">
        <path d="M0.500 0.500h12v12H0.500zM3.500 2.500h6v8h-6zM5 4.500h3M5 6.500h3M5 8.500h3" />
      </svg>
    </button>
    <button aria-label="Page break preview" className="flex w-[38px] justify-center">
      <svg width="14" height="13" viewBox="0 0 14 13" fill="none" stroke="#666">
        <path d="M0.500 0.500h13v12H0.500zM4.500 0.500v7h4.500v-7M4.500 7.500h4.500" />
      </svg>
    </button>
    <button aria-label="Zoom out" className="ml-[3px] flex w-3 justify-center">
      <svg width="6" height="2">
        <path d="M0 1h6" stroke="#666" strokeWidth="2" />
      </svg>
    </button>
    <div className="relative flex h-full w-[100px] items-center">
      <i className="absolute top-2 left-1/2 h-[6px] w-px bg-[#ababab]" />
      <input
        type="range"
        aria-label="Zoom"
        defaultValue={34}
        className="h-px w-full appearance-none bg-[#ababab] [&::-webkit-slider-thumb]:h-[11px] [&::-webkit-slider-thumb]:w-1 [&::-webkit-slider-thumb]:appearance-none [&::-webkit-slider-thumb]:bg-[#666]"
      />
    </div>
    <button aria-label="Zoom in" className="flex w-4 justify-center">
      <svg width="8" height="8" stroke="#666" strokeWidth="2">
        <path d="M0 4h8M4 0v8" />
      </svg>
    </button>
    <span className="w-[47px] pl-[11px]">70%</span>
  </footer>
);

export default function App() {
  return (
    <div className="flex h-screen flex-col overflow-hidden bg-black font-['Open_Sans','DejaVu_Sans',sans-serif]">
      <Header />
      <Ribbon />
      <FormulaBar />
      <Sheet />
      <SheetTabs />
      <StatusBar />
      <div className="flex h-2 shrink-0 justify-between overflow-hidden bg-black pl-[342px] text-[11px] text-white">
        <span className="h-full w-[46px] bg-[#333]" />
        <time className="pt-[2px] pr-[17px] leading-4">3:20 PM</time>
      </div>
    </div>
  );
}
